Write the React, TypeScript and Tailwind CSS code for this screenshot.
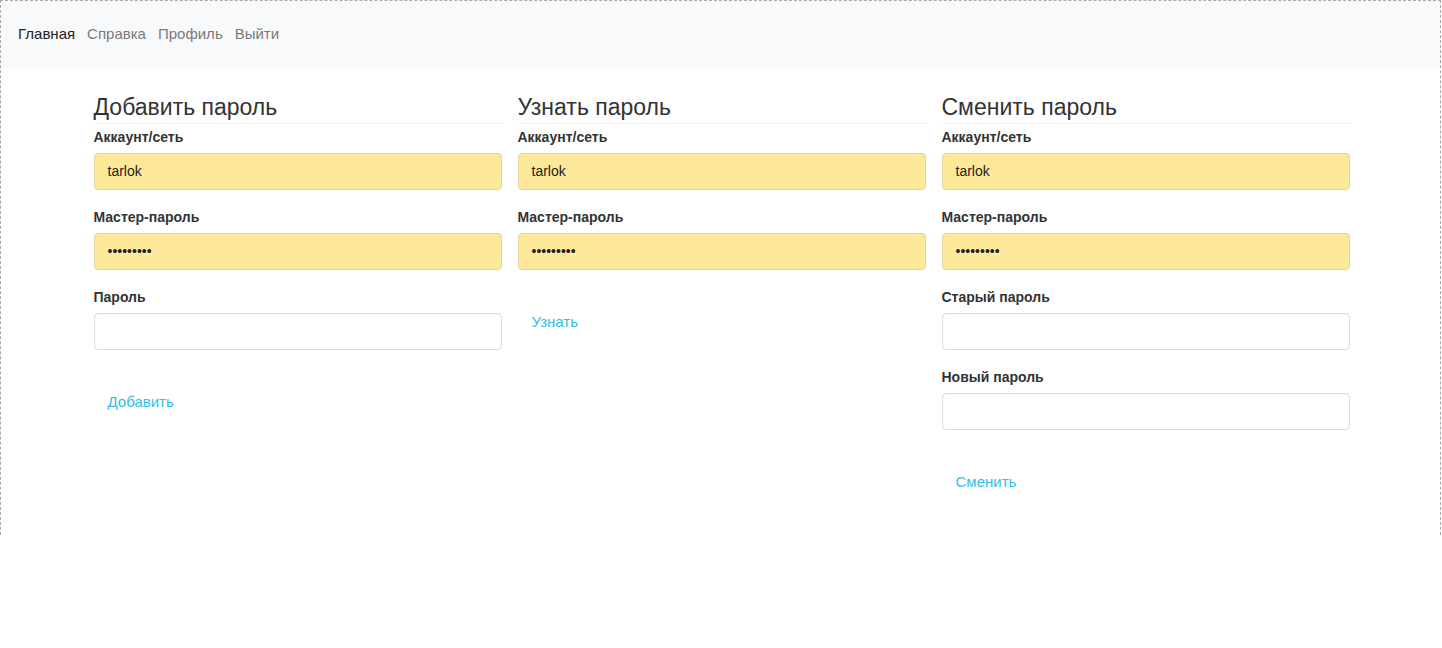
import React from "react";

const font = { fontFamily: '"Liberation Sans", Arial, sans-serif' };

function Field({ label, value, filled }: { label: string; value?: string; filled?: boolean }) {
  return (
    <div className="mb-[17px]">
      <div className="h-5 mb-[6px] text-[14px] leading-5 font-bold text-[#333]">{label}</div>
      <div
        className={
          "h-[37px] rounded-[4px] border flex items-center px-[13px] text-[14px] text-[#222] " +
          (filled ? "bg-[#fee99a] border-[#e3d49b]" : "bg-white border-[#dcdcdc] shadow-[inset_0_1px_1px_rgba(0,0,0,0.04)]")
        }
      >
        {value}
      </div>
    </div>
  );
}

function Column({ title, children, action }: { title: string; children: React.ReactNode; action: string }) {
  return (
    <div className="w-[424px] px-[8px]">
      <div className="text-[23px] leading-[26px] text-[#333] pb-[3px] border-b border-[#eeeeee] mt-[25px] mb-[3px]">{title}</div>
      {children}
      <div className="mt-[34px] h-[36px] flex items-center pl-[14px] text-[15px] text-[#31c0e8]">{action}</div>
    </div>
  );
}

export default function App() {
  const dots = "•••••••••";
  return (
    <div style={font} className="w-[1442px] h-[648px] bg-white">
      <div className="w-[1441px] h-[535px] border-l border-r border-t border-dashed border-[#a8a8a8]">
        <div className="h-[68px] bg-[#f8f9fa] flex items-center pl-[17px] pb-[1px] gap-[12px] text-[15px]">
          <span className="text-[#222]">Главная</span>
          <span className="text-[#7a7a7a]">Справка</span>
          <span className="text-[#7a7a7a]">Профиль</span>
          <span className="text-[#7a7a7a]">Выйти</span>
        </div>
        <div className="flex justify-center">
          <div className="flex ml-[2px]">
            <Column title="Добавить пароль" action="Добавить">
              <Field label="Аккаунт/сеть" value="tarlok" filled />
              <Field label="Мастер-пароль" value={dots} filled />
              <Field label="Пароль" />
            </Column>
            <Column title="Узнать пароль" action="Узнать">
              <Field label="Аккаунт/сеть" value="tarlok" filled />
              <Field label="Мастер-пароль" value={dots} filled />
            </Column>
            <Column title="Сменить пароль" action="Сменить">
              <Field label="Аккаунт/сеть" value="tarlok" filled />
              <Field label="Мастер-пароль" value={dots} filled />
              <Field label="Старый пароль" />
              <Field label="Новый пароль" />
            </Column>
          </div>
        </div>
      </div>
    </div>
  );
}
